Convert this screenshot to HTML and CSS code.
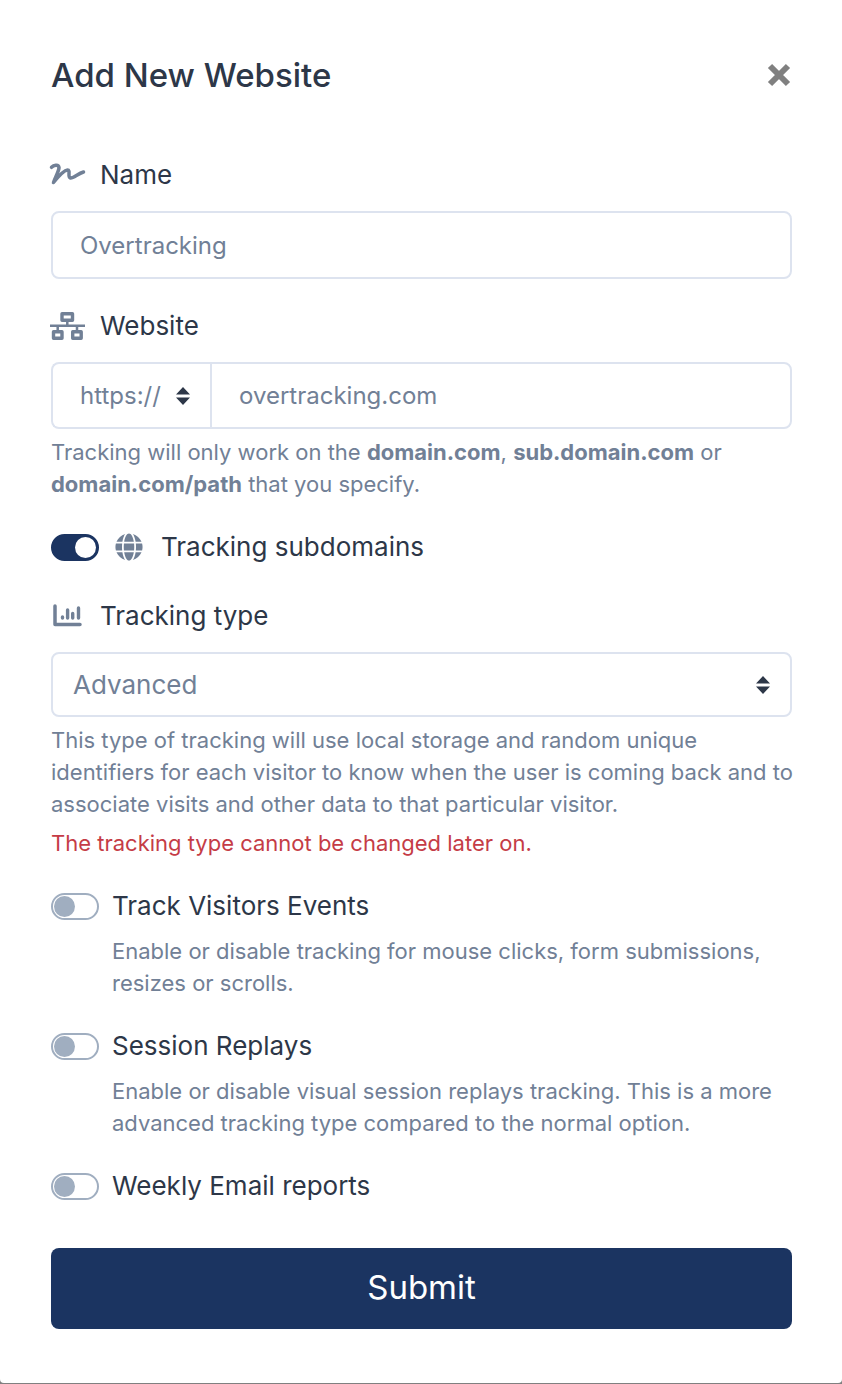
FILE: index.html
```html
<!DOCTYPE html>
<html lang="en">
<head>
  <meta charset="UTF-8" />
  <meta name="viewport" content="width=device-width, initial-scale=1.0"/>
  <title>Add New Website</title>
  <link rel="stylesheet" href="styles.css">
</head>
<body>
  <div class="modal">
    <div class="modal-header">
      <h1 class="modal-title">Add New Website</h1>
      <button type="button" class="close" aria-label="Close">
        <svg width="24" height="24" viewBox="0 0 24 24"><path d="M3 3l18 18M21 3L3 21" stroke="currentColor" stroke-width="6"/></svg>
      </button>
    </div>

    <form>
      <div class="form-group">
        <label class="label" for="name">
          <svg class="icon" viewBox="0 0 34 28" fill="none" stroke="currentColor" stroke-width="3.5" stroke-linecap="round" stroke-linejoin="round"><path d="M1.500 6.300C3.500 4.300 8.500 2.800 9 6.500C9.200 9.500 5.500 16 3.500 21.500C7.500 16.500 14 9.300 17.500 9C21 9 17 16 20.500 17C23.500 17.500 28 12.500 33.500 11"/></svg>
          Name
        </label>
        <input type="text" id="name" class="form-control" placeholder="Overtracking">
      </div>

      <div class="form-group">
        <label class="label" for="host">
          <svg class="icon" viewBox="0 0 34 28" fill="none" stroke="currentColor" stroke-linejoin="round"><path d="M12 1.800h10.500v6.400H12zM3.500 19.800h8.500v6.400H3.500zM22.700 19.800h8.500v6.400h-8.500z" stroke-width="3.400"/><path d="M0 13.800h35M17.300 9v5M7.700 14v5M27 14v5" stroke-width="2.500"/></svg>
          Website
        </label>
        <div class="input-group">
          <select class="form-control scheme" aria-label="Scheme">
            <option>https://</option>
            <option>http://</option>
          </select>
          <input type="text" id="host" class="form-control host" placeholder="overtracking.com">
        </div>
        <p class="help">Tracking will only work on the <strong>domain.com</strong>, <strong>sub.domain.com</strong> or <strong>domain.com/path</strong> that you specify.</p>
      </div>

      <div class="form-group switch-row">
        <input type="checkbox" class="switch" id="subdomains" checked>
        <label class="label label-globe" for="subdomains">
          <svg class="icon-globe" viewBox="0 0 496 512" fill="currentColor"><path d="M336.500 160C322 70.700 287.800 8 248 8s-74 62.700-88.500 152h177zM152 256c0 22.200 1.200 43.500 3.300 64h185.300c2.100-20.500 3.300-41.800 3.300-64s-1.200-43.500-3.300-64H155.300c-2.100 20.500-3.300 41.800-3.300 64zm324.700-96c-28.600-67.900-86.500-120.400-158-141.600 24.400 33.800 41.200 84.700 50 141.600h108zM177.200 18.400C105.800 39.600 47.800 92.100 19.300 160h108c8.700-56.900 25.500-107.800 49.900-141.600zM487.400 192H372.700c2.100 21 3.300 42.500 3.300 64s-1.200 43-3.300 64h114.600c5.500-20.500 8.600-41.800 8.600-64s-3.100-43.500-8.500-64zM120 256c0-21.500 1.200-43 3.300-64H8.600C3.200 212.500 0 233.800 0 256s3.200 43.500 8.600 64h114.600c-2-21-3.200-42.500-3.200-64zm39.500 96c14.500 89.300 48.700 152 88.500 152s74-62.700 88.500-152h-177zm159.300 141.600c71.400-21.200 129.400-73.700 158-141.600h-108c-8.800 56.900-25.600 107.800-50 141.600zM19.300 352c28.600 67.900 86.500 120.400 158 141.600-24.400-33.800-41.200-84.700-50-141.600h-108z"/></svg>
          Tracking subdomains
        </label>
      </div>

      <div class="form-group">
        <label class="label" for="type">
          <svg class="icon" viewBox="0 0 34 28" fill="none" stroke="currentColor" stroke-linejoin="round" stroke-linecap="round"><path d="M5 4v18.500h25" stroke-width="3.500"/><path d="M12.500 15v1M17.600 8v8M22.700 11.500v4.500M28.500 6v10" stroke-width="3.400"/></svg>
          Tracking type
        </label>
        <select id="type" class="form-control type">
          <option>Advanced</option>
          <option>Lightweight</option>
        </select>
        <p class="help">This type of tracking will use local storage and random unique identifiers for each visitor to know when the user is coming back and to associate visits and other data to that particular visitor.</p>
        <p class="help danger">The tracking type cannot be changed later on.</p>
      </div>

      <div class="form-group">
        <div class="switch-row">
          <input type="checkbox" class="switch" id="events">
          <label class="label" for="events">Track Visitors Events</label>
        </div>
        <p class="help indent">Enable or disable tracking for mouse clicks, form submissions, resizes or scrolls.</p>
      </div>

      <div class="form-group">
        <div class="switch-row">
          <input type="checkbox" class="switch" id="replays">
          <label class="label" for="replays">Session Replays</label>
        </div>
        <p class="help indent">Enable or disable visual session replays tracking. This is a more advanced tracking type compared to the normal option.</p>
      </div>

      <div class="form-group switch-row">
        <input type="checkbox" class="switch" id="reports">
        <label class="label" for="reports">Weekly Email reports</label>
      </div>

      <button type="submit" class="submit">Submit</button>
    </form>
  </div>
</body>
</html>
```
FILE: styles.css
```css
* {
  box-sizing: border-box;
}
body {
  margin: 0;
  background: #808080;
  font-family: Inter, "Liberation Sans", sans-serif;
  color: #2d3748;
}
.modal {
  background: #fff;
  padding: 51px 50px 54px 51px;
  margin-bottom: 1px;
  border-radius: 0 0 4px 4px;
}
.modal-header {
  display: flex;
  align-items: center;
  justify-content: space-between;
  margin-bottom: 56px;
}
.modal-title {
  margin: 0;
  font-size: 33px;
  font-weight: 500;
  line-height: 48px;
}
.close {
  display: flex;
  padding: 0 1px 0 0;
  border: 0;
  background: none;
  color: #808080;
}
.form-group {
  margin-bottom: 27px;
}
.label {
  display: flex;
  align-items: center;
  gap: 16px;
  font-size: 26px;
  line-height: 40px;
}
.label-globe {
  gap: 18px;
}
.icon {
  width: 34px;
  height: 28px;
  margin-left: -1px;
  color: #718096;
  overflow: visible;
}
.icon-globe {
  width: 28px;
  height: 28px;
  margin-left: 3px;
  color: #718096;
}
.form-control {
  display: block;
  width: 100%;
  height: 68px;
  margin: 16px 0 0;
  padding: 0 27px;
  border: 2px solid #dde3ef;
  border-radius: 8px;
  background: #fff;
  color: #718096;
  font-family: inherit;
  font-size: 24px;
}
.form-control::placeholder {
  color: #718096;
  opacity: 1;
}
select.form-control {
  appearance: none;
  background: #fff url("data:image/svg+xml,%3Csvg xmlns='http://www.w3.org/2000/svg' width='14' height='18' viewBox='0 0 14 18'%3E%3Cpath fill='%232d3748' d='M7 0l7 7.500H0zM7 18l7-7.500H0z'/%3E%3C/svg%3E") no-repeat right 20px center;
}
.input-group {
  display: flex;
  margin-top: 16px;
}
.input-group .form-control {
  height: 67px;
  margin-top: 0;
}
.input-group .scheme {
  flex: 0 0 161px;
  width: auto;
  padding-right: 40px;
  border-right: 0;
  border-radius: 8px 0 0 8px;
  background-position: right 22px center;
}
.input-group .host {
  flex: 1;
  min-width: 0;
  margin-left: -2px;
  border-radius: 0 8px 8px 0;
}
.form-control.type {
  height: 65px;
  padding-left: 20px;
  font-size: 26px;
}
.help {
  margin: 7px -8px 0 0;
  color: #718096;
  font-size: 22px;
  line-height: 32px;
}
.help.danger {
  color: #c53c46;
}
.help.indent {
  margin-top: 9px;
  margin-left: 61px;
}
.switch-row {
  display: flex;
  align-items: center;
  gap: 13px;
}
.form-group.switch-row {
  margin-bottom: 29px;
}
.switch {
  appearance: none;
  flex: none;
  width: 48px;
  height: 27px;
  margin: 0;
  padding: 1px;
  border: 2px solid #a0aec0;
  border-radius: 14px;
  background: #fff;
}
.switch::before {
  content: "";
  display: block;
  width: 21px;
  height: 21px;
  border-radius: 50%;
  background: #a0aec0;
}
.switch:checked {
  border-color: #1b3461;
  background: #1b3461;
}
.switch:checked::before {
  margin-left: auto;
  background: #fff;
}
.submit {
  display: block;
  width: 100%;
  height: 81px;
  margin-top: 42px;
  padding: 0 0 4px;
  border: 0;
  border-radius: 8px;
  background: #1b3461;
  color: #fff;
  font-family: inherit;
  font-size: 33px;
}
```
